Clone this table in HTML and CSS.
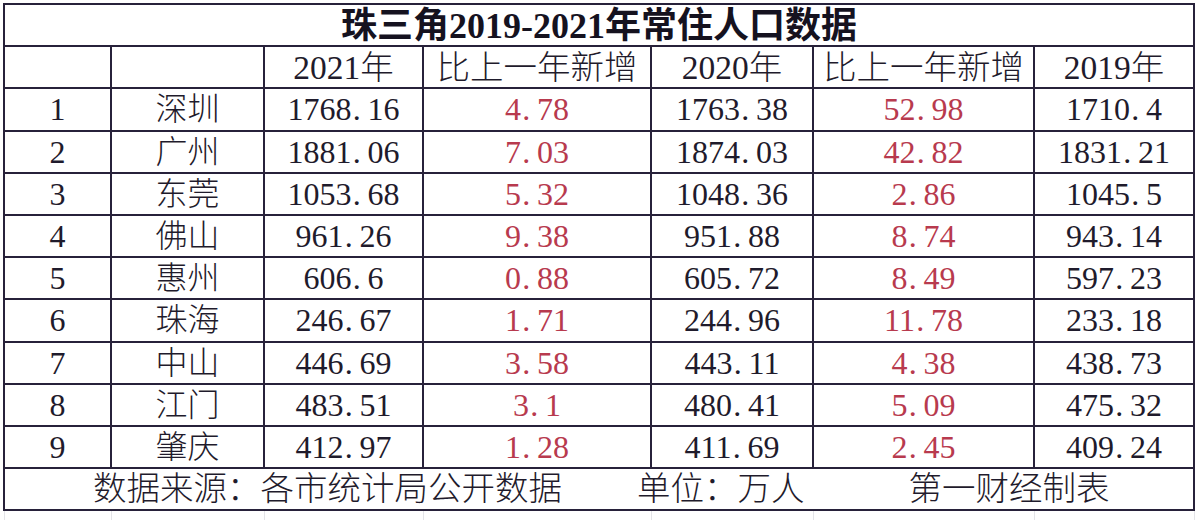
FILE: index.html
```html
<!DOCTYPE html>
<html lang="zh-CN">
<head>
<meta charset="utf-8">
<title>珠三角2019-2021年常住人口数据</title>
<link rel="stylesheet" href="styles.css">
</head>
<body>
<div class="sheet">
<table class="grid">
  <colgroup>
    <col class="c1"><col class="c2"><col class="c3"><col class="c4"><col class="c5"><col class="c6"><col class="c7">
  </colgroup>
  <tr class="title-row"><th colspan="7">珠三角2019-2021年常住人口数据</th></tr>
  <tr class="head-row">
    <td></td><td></td><td>2021年</td><td>比上一年新增</td><td>2020年</td><td>比上一年新增</td><td>2019年</td>
  </tr>
  <tr><td>1</td><td>深圳</td><td>1768<span class="dot">.</span>16</td><td class="red">4<span class="dot">.</span>78</td><td>1763<span class="dot">.</span>38</td><td class="red">52<span class="dot">.</span>98</td><td>1710<span class="dot">.</span>4</td></tr>
  <tr><td>2</td><td>广州</td><td>1881<span class="dot">.</span>06</td><td class="red">7<span class="dot">.</span>03</td><td>1874<span class="dot">.</span>03</td><td class="red">42<span class="dot">.</span>82</td><td>1831<span class="dot">.</span>21</td></tr>
  <tr><td>3</td><td>东莞</td><td>1053<span class="dot">.</span>68</td><td class="red">5<span class="dot">.</span>32</td><td>1048<span class="dot">.</span>36</td><td class="red">2<span class="dot">.</span>86</td><td>1045<span class="dot">.</span>5</td></tr>
  <tr><td>4</td><td>佛山</td><td>961<span class="dot">.</span>26</td><td class="red">9<span class="dot">.</span>38</td><td>951<span class="dot">.</span>88</td><td class="red">8<span class="dot">.</span>74</td><td>943<span class="dot">.</span>14</td></tr>
  <tr><td>5</td><td>惠州</td><td>606<span class="dot">.</span>6</td><td class="red">0<span class="dot">.</span>88</td><td>605<span class="dot">.</span>72</td><td class="red">8<span class="dot">.</span>49</td><td>597<span class="dot">.</span>23</td></tr>
  <tr><td>6</td><td>珠海</td><td>246<span class="dot">.</span>67</td><td class="red">1<span class="dot">.</span>71</td><td>244<span class="dot">.</span>96</td><td class="red">11<span class="dot">.</span>78</td><td>233<span class="dot">.</span>18</td></tr>
  <tr><td>7</td><td>中山</td><td>446<span class="dot">.</span>69</td><td class="red">3<span class="dot">.</span>58</td><td>443<span class="dot">.</span>11</td><td class="red">4<span class="dot">.</span>38</td><td>438<span class="dot">.</span>73</td></tr>
  <tr><td>8</td><td>江门</td><td>483<span class="dot">.</span>51</td><td class="red">3<span class="dot">.</span>1</td><td>480<span class="dot">.</span>41</td><td class="red">5<span class="dot">.</span>09</td><td>475<span class="dot">.</span>32</td></tr>
  <tr><td>9</td><td>肇庆</td><td>412<span class="dot">.</span>97</td><td class="red">1<span class="dot">.</span>28</td><td>411<span class="dot">.</span>69</td><td class="red">2<span class="dot">.</span>45</td><td>409<span class="dot">.</span>24</td></tr>
  <tr class="foot-row"><td colspan="7"><div class="foot"><span class="src">数据来源：各市统计局公开数据</span><span class="unit">单位：万人</span><span class="maker">第一财经制表</span></div></td></tr>
  <tr class="ghost"><td></td><td></td><td></td><td></td><td></td><td></td><td></td></tr>
</table>
</div>
</body>
</html>
```
FILE: styles.css
```css
html, body {
  margin: 0;
  padding: 0;
  background: #ffffff;
}
.sheet {
  padding: 3px 0 0 3px;
  width: 1200px;
  height: 520px;
  overflow: hidden;
  box-sizing: border-box;
}
.grid {
  border-collapse: collapse;
  table-layout: fixed;
  width: 1190px;
  font-family: "Liberation Serif", "Noto Sans CJK SC", serif;
  font-size: 32px;
  font-weight: 300;
  color: #1f1b2c;
}
.c1 { width: 107px; }
.c2 { width: 153px; }
.c3 { width: 159px; }
.c4 { width: 228px; }
.c5 { width: 162px; }
.c6 { width: 221px; }
.c7 { width: 160px; }
.grid td, .grid th {
  border: 2px solid #27213a;
  padding: 0;
  text-align: center;
  vertical-align: middle;
  line-height: 1;
  white-space: nowrap;
}
.grid tr { height: 42.2px; }
.title-row { height: 41px; }
.title-row th {
  font-size: 36px;
  font-weight: 700;
  color: #15121f;
  padding-top: 1px;
}
.head-row { height: 43px; }
.head-row td { font-size: 33.5px; }
.red { color: #b83a4e; }
.dot {
  display: inline-block;
  width: 0.5em;
  text-align: left;
  text-indent: 0.04em;
}
.foot-row { height: 42px; }
.foot-row td { font-size: 33.5px; }
.foot {
  display: flex;
  align-items: center;
  padding-left: 88px;
}
.unit { margin-left: 75px; }
.maker { margin-left: 104px; }
.ghost { height: 20px; }
.grid .ghost td {
  border: 1px solid #e4e4e8;
  border-top: 2px solid #27213a;
}
```
